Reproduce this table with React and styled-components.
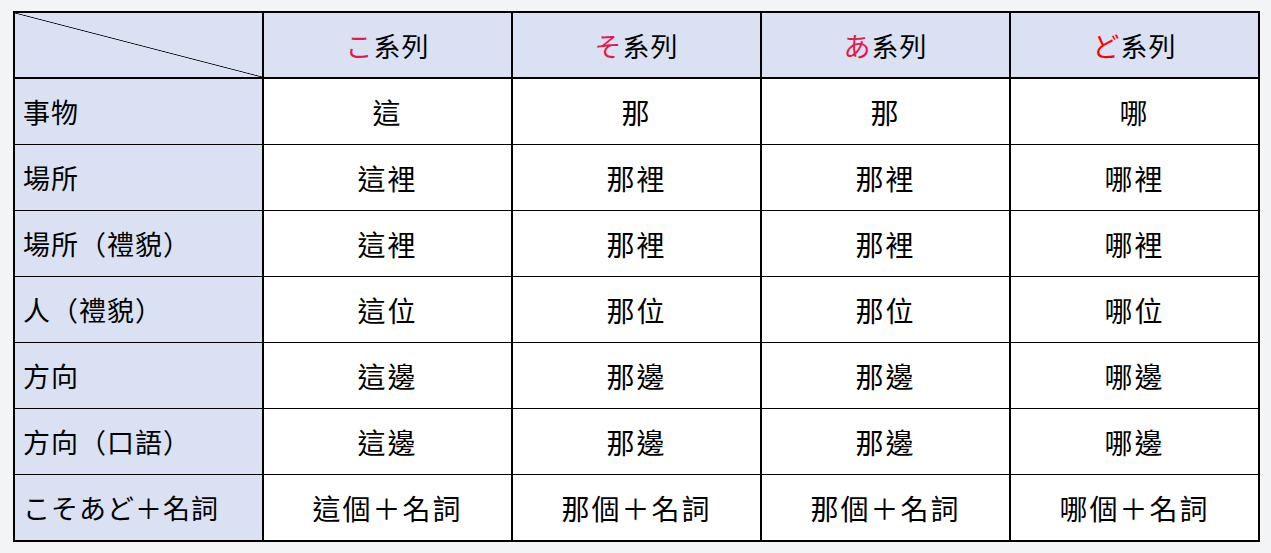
import React from 'react';
import styled, { createGlobalStyle } from 'styled-components';

const GlobalStyle = createGlobalStyle`
  html, body {
    margin: 0;
    padding: 0;
    background: #f3f4f6;
  }
  body {
    font-family: "Noto Sans CJK TC", "Noto Sans CJK JP", sans-serif;
  }
`;

const Page = styled.div`
  padding: 11px 11px 13px 13px;
`;

const Table = styled.table`
  width: 1247px;
  border-collapse: collapse;
  table-layout: fixed;
  border: 2px solid #000;
  font-size: 27px;
  letter-spacing: 1px;
  color: #000;
`;

const HeadCell = styled.th`
  height: 64px;
  padding: 0;
  font-weight: normal;
  background: #d9e1f2;
  border-left: 2px solid #000;
  border-bottom: 2px solid #000;
  text-align: center;
  vertical-align: middle;
`;

const CornerCell = styled(HeadCell)`
  background:
    linear-gradient(to top right, transparent calc(50% - 0.8px), #000 50%, transparent calc(50% + 0.8px)),
    #d9e1f2;
`;

const LabelCell = styled.td`
  height: 65px;
  padding: 0 0 0 8px;
  background: #d9e1f2;
  border-top: 1px solid #000;
  text-align: left;
  vertical-align: middle;
`;

const Cell = styled.td`
  height: 65px;
  padding: 0;
  background: #fff;
  border-top: 1px solid #000;
  border-left: 2px solid #000;
  text-align: center;
  vertical-align: middle;
  font-size: 28px;
  letter-spacing: 2px;
`;

const Kana = styled.span`
  color: ${props => props.bright ? '#ff0000' : '#e6174a'};
`;

const series = [
  { kana: 'こ' },
  { kana: 'そ' },
  { kana: 'あ' },
  { kana: 'ど', bright: true },
];

const rows = [
  ['事物', '這', '那', '那', '哪'],
  ['場所', '這裡', '那裡', '那裡', '哪裡'],
  ['場所（禮貌）', '這裡', '那裡', '那裡', '哪裡'],
  ['人（禮貌）', '這位', '那位', '那位', '哪位'],
  ['方向', '這邊', '那邊', '那邊', '哪邊'],
  ['方向（口語）', '這邊', '那邊', '那邊', '哪邊'],
  ['こそあど＋名詞', '這個＋名詞', '那個＋名詞', '那個＋名詞', '哪個＋名詞'],
];

const App = () => {
  return (
    <>
      <GlobalStyle />
      <Page>
        <Table>
          <thead>
            <tr>
              <CornerCell />
              {series.map((s, i) => (
                <HeadCell key={i}>
                  <Kana bright={s.bright}>{s.kana}</Kana>系列
                </HeadCell>
              ))}
            </tr>
          </thead>
          <tbody>
            {rows.map((row, i) => (
              <tr key={i}>
                <LabelCell>{row[0]}</LabelCell>
                {row.slice(1).map((text, j) => <Cell key={j}>{text}</Cell>)}
              </tr>
            ))}
          </tbody>
        </Table>
      </Page>
    </>
  );
};

export default App;
